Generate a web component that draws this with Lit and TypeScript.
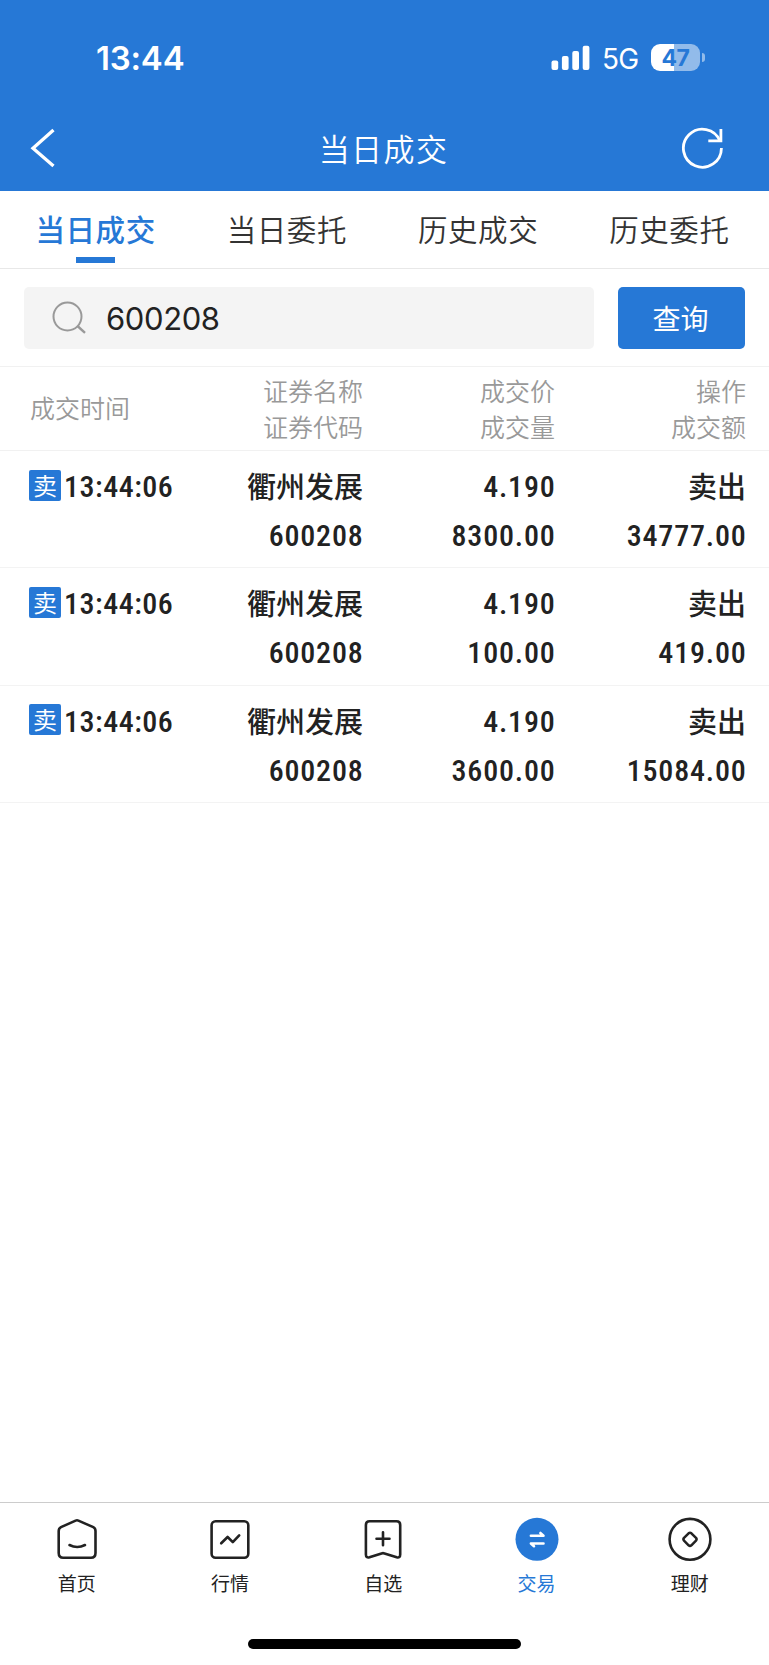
import { LitElement, html, css, svg } from "lit";
import { customElement, state } from "lit/decorators.js";

interface Deal {
  time: string;
  name: string;
  code: string;
  price: string;
  volume: string;
  action: string;
  amount: string;
}

const DEALS: Deal[] = [
  { time: "13:44:06", name: "衢州发展", code: "600208", price: "4.190", volume: "8300.00", action: "卖出", amount: "34777.00" },
  { time: "13:44:06", name: "衢州发展", code: "600208", price: "4.190", volume: "100.00", action: "卖出", amount: "419.00" },
  { time: "13:44:06", name: "衢州发展", code: "600208", price: "4.190", volume: "3600.00", action: "卖出", amount: "15084.00" },
];

const ICONS = {
  home: svg`<path d="M3.700 16Q3.700 13.300 6 12.100L20.600 5.600Q22 5 23.400 5.600L38.300 12.100Q40.500 13.300 40.500 16V38Q40.500 42.700 36 42.700H8.200Q3.700 42.700 3.700 38Z"/><path d="M14.500 30Q22.200 34 30 30" stroke-width="2.600"/>`,
  quotes: svg`<rect x="3.600" y="6.200" width="36.700" height="36.500" rx="4"/><path d="M13.200 28.300 19.600 22 24.800 27.200 31.200 20.400" stroke-width="2.600"/>`,
  watch: svg`<path d="M8.500 6.300H35.500Q39.200 6.300 39.200 10V39.500Q39.200 43.200 35.700 42.300L23.500 38.400Q22 37.900 20.500 38.400L8.500 42.300Q4.900 43.200 4.900 39.500V10Q4.900 6.300 8.500 6.300Z"/><path d="M22 17.200V30.200M15.500 23.700H28.500" stroke-width="2.600"/>`,
  trade: svg`<circle cx="22" cy="24.300" r="21.500" fill="#2678d6" stroke="none"/><path d="M15.900 20.700H28.500L25.400 18M28.500 28.500H15.900L19 31.200" stroke="#fff" stroke-width="2.600"/>`,
  wealth: svg`<circle cx="22" cy="24.300" r="20.400"/><path d="M20.600 18.300Q22 17.100 23.400 18.300L28 22.900Q29.200 24.300 28 25.700L23.400 30.300Q22 31.500 20.600 30.300L16 25.700Q14.800 24.300 16 22.900Z" stroke-width="2.500"/>`,
};

@customElement("app-root")
export class AppRoot extends LitElement {
  @state() private tab = 0;
  @state() private nav = 3;

  static styles = css`
    :host {
      display: flex;
      flex-direction: column;
      height: 1665px;
      background: #fff;
      color: #222;
      font-family: "Noto Sans CJK SC", sans-serif;
    }
    * { box-sizing: border-box; }
    .top { background: #2678d6; color: #fff; height: 191px; flex: none; }
    .status {
      height: 106px;
      padding: 9px 64px 0 96px;
      display: flex;
      align-items: center;
      justify-content: space-between;
      font-family: Inter, sans-serif;
    }
    .clock { font-size: 33px; font-weight: 600; letter-spacing: -0.2px; line-height: 40px; }
    .signals { display: flex; align-items: center; height: 40px; }
    .bars { display: block; width: 39px; height: 26px; }
    .net { font-size: 28px; line-height: 40px; margin-left: 12px; width: 37px; letter-spacing: -0.8px; padding-top: 2px; }
    .batt {
      width: 49px;
      height: 27px;
      margin-left: 12px;
      border-radius: 9px;
      background: linear-gradient(90deg, #fff 47%, #92bbea 47%);
      color: #2678d6;
      font-size: 23px;
      font-weight: 700;
      line-height: 28px;
      text-align: center;
      letter-spacing: -0.5px;
    }
    .tip { width: 3px; height: 9px; margin: 0 0 0 2px; border-radius: 0 4px 4px 0; background: #92bbea; }
    .bar {
      height: 85px;
      display: grid;
      grid-template-columns: 100px 1fr 100px;
      align-items: center;
      padding-bottom: 1px;
    }
    .bar svg { display: block; }
    .back { margin-left: 28px; }
    .refresh { margin-left: 11px; }
    .title { font-size: 31px; line-height: 44px; letter-spacing: 1.4px; text-align: center; font-weight: 350; padding: 0 2px 1px 0; }
    .tabs {
      height: 78px;
      flex: none;
      display: grid;
      grid-template-columns: repeat(4, 1fr);
      padding: 0 4px 0 0;
      border-bottom: 1px solid #e8e8e8;
    }
    .tab {
      display: flex;
      flex-direction: column;
      align-items: center;
      font-size: 29.5px;
      line-height: 42px;
      letter-spacing: 0.6px;
      color: #333;
      padding-top: 16px;
      white-space: nowrap;
      font-weight: 350;
    }
    .tab.on { color: #2678d6; font-weight: 500; }
    .tab.on::after { content: ""; width: 39px; height: 6px; margin-top: 8px; background: #2678d6; }
    .search {
      flex: none;
      height: 98px;
      padding: 18px 24.5px 18px 24px;
      display: flex;
      gap: 23.5px;
      border-bottom: 1px solid #f1f1f1;
    }
    .field {
      flex: 1;
      height: 62px;
      background: #f4f4f4;
      border-radius: 5px;
      display: flex;
      align-items: center;
      padding-left: 28px;
      font-family: Inter, sans-serif;
      font-size: 31px;
      letter-spacing: -0.4px;
      color: #222;
    }
    .field svg { margin-right: 20px; }
    .query {
      width: 127px;
      height: 62px;
      border-radius: 5px;
      background: #2678d6;
      color: #fff;
      font-size: 28px;
      line-height: 62px;
      text-align: center;
      padding-right: 1px;
    }
    .grid {
      flex: none;
      display: grid;
      grid-template-columns: 171px 192px 192px 191px;
      text-align: right;
      white-space: nowrap;
    }
    .head {
      height: 84px;
      color: #999;
      font-size: 25px;
      line-height: 36px;
      font-weight: 350;
      padding-top: 5px;
      border-bottom: 1px solid #f1f1f1;
    }
    .head .first { text-align: left; padding: 17px 0 0 30px; }
    .row {
      height: 117.33px;
      border-bottom: 1px solid #f3f3f3;
      padding-top: 10px;
      font-weight: 500;
      font-size: 29px;
      line-height: 49px;
    }
    .num {
      font-family: "Roboto Condensed", Roboto, sans-serif;
      font-size: 30px;
      letter-spacing: 0.8px;
      margin-right: -0.5px;
      position: relative;
      top: 1px;
    }
    .when { display: flex; align-items: center; padding-left: 29px; height: 49px; }
    .when .num { letter-spacing: 0.5px; }
    .tag {
      flex: none;
      width: 32px;
      height: 31px;
      border-radius: 2px;
      background: #2678d6;
      color: #fff;
      font-size: 24px;
      line-height: 30px;
      font-weight: 400;
      text-align: center;
      margin: -1px 3px 0 0;
    }
    .fill { flex: 1; }
    .nav {
      flex: none;
      height: 137px;
      border-top: 1px solid #ccc;
      display: grid;
      grid-template-columns: repeat(5, 1fr);
      padding: 12px 2.5px 0 0;
    }
    .item { display: flex; flex-direction: column; align-items: center; font-size: 19px; line-height: 28px; color: #222; }
    .item svg { display: block; width: 44px; height: 48px; margin-bottom: 6px; }
    .item.on { color: #2678d6; }
    .homebar { flex: none; width: 273px; height: 10px; border-radius: 5px; background: #000; margin: 0 auto 16px; }
  `;

  render() {
    const tabs = ["当日成交", "当日委托", "历史成交", "历史委托"];
    const nav: [keyof typeof ICONS, string][] = [
      ["home", "首页"], ["quotes", "行情"], ["watch", "自选"], ["trade", "交易"], ["wealth", "理财"],
    ];
    return html`
      <header class="top">
        <div class="status">
          <span class="clock">13:44</span>
          <div class="signals">
            <svg class="bars" viewBox="0 0 39 26" fill="#fff">
              <rect x="0.500" y="15.500" width="6.700" height="9.500" rx="2" />
              <rect x="10.900" y="11" width="6.700" height="14" rx="2" />
              <rect x="21.300" y="6" width="6.700" height="19" rx="2" />
              <rect x="31.700" y="0.800" width="6.700" height="24.200" rx="2" />
            </svg>
            <span class="net">5G</span>
            <span class="batt">47</span><span class="tip"></span>
          </div>
        </div>
        <div class="bar">
          <svg class="back" width="30" height="44" viewBox="0 0 30 44" fill="none" stroke="#fff" stroke-width="3.300">
            <path d="M25.500 4 5 22.200 25.500 40" />
          </svg>
          <span class="title">当日成交</span>
          <svg class="refresh" width="46" height="46" viewBox="0 0 46 46" fill="none" stroke="#fff" stroke-width="2.800">
            <path d="M41.400 23A19 19 0 1 1 40 16" />
            <path d="M40.900 4V15.800H28.300" />
          </svg>
        </div>
      </header>
      <nav class="tabs">
        ${tabs.map((t, i) => html`<div class="tab ${i === this.tab ? "on" : ""}" @click=${() => (this.tab = i)}>${t}</div>`)}
      </nav>
      <div class="search">
        <div class="field">
          <svg width="34" height="34" viewBox="0 0 34 34" fill="none" stroke="#999" stroke-width="2">
            <circle cx="15.500" cy="15.500" r="14" /><path d="M25.500 25 33 31.800" stroke-width="2.400" />
          </svg>
          <span>600208</span>
        </div>
        <div class="query">查询</div>
      </div>
      <div class="grid head">
        <div class="first">成交时间</div>
        <div>证券名称<br />证券代码</div>
        <div>成交价<br />成交量</div>
        <div>操作<br />成交额</div>
      </div>
      ${DEALS.map((d) => html`
        <div class="grid row">
          <div class="when"><span class="tag">卖</span><span class="num">${d.time}</span></div>
          <div><div>${d.name}</div><div class="num">${d.code}</div></div>
          <div><div class="num">${d.price}</div><div class="num">${d.volume}</div></div>
          <div><div>${d.action}</div><div class="num">${d.amount}</div></div>
        </div>`)}
      <div class="fill"></div>
      <nav class="nav">
        ${nav.map(([icon, label], i) => html`
          <div class="item ${i === this.nav ? "on" : ""}" @click=${() => (this.nav = i)}>
            <svg viewBox="0 0 44 48" fill="none" stroke="#222" stroke-width="2.600" stroke-linecap="round" stroke-linejoin="round">${ICONS[icon]}</svg>
            <span>${label}</span>
          </div>`)}
      </nav>
      <div class="homebar"></div>
    `;
  }
}
